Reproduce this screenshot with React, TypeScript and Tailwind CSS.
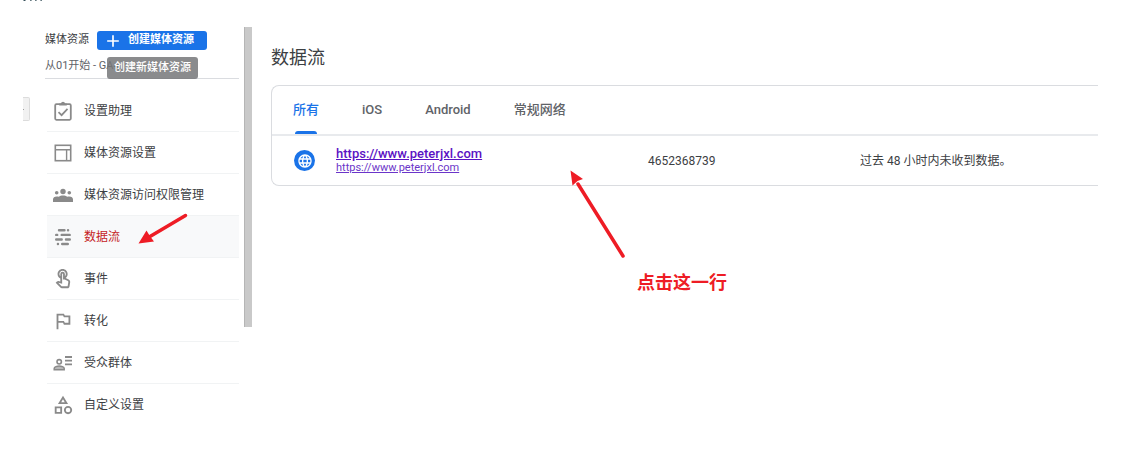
import type { ReactNode } from "react";
import clsx from "clsx";
import {
   MdAdd,
   MdLanguage,
   MdOutlineCategory,
   MdOutlinedFlag,
   MdOutlineTouchApp,
} from "react-icons/md";

type NavItem = {
   label: string;
   icon: ReactNode;
   active?: boolean;
};

type Stream = {
   name: string;
   url: string;
   id: string;
   status: string;
};

function ClipboardIcon() {
   return (
      <svg viewBox="0 0 22 22" className="h-[22px] w-[22px]" fill="none" stroke="currentColor">
         <rect x="3.200" y="4.200" width="15.600" height="15.600" rx="1.200" strokeWidth="1.800" />
         <path d="M7.200 3.400h1.600a2.300 2.300 0 0 1 4.400 0h1.600v2H7.200z" fill="currentColor" stroke="none" />
         <path d="M6.500 12.200 9.600 15.200 15.500 8.800" strokeWidth="1.700" />
      </svg>
   );
}

function LayoutIcon() {
   return (
      <svg viewBox="0 0 22 22" className="h-[22px] w-[22px]" fill="none" stroke="currentColor">
         <rect x="3.300" y="3.300" width="15.400" height="15.400" strokeWidth="1.600" />
         <path d="M4 7.700h14M14.600 8v10.500" strokeWidth="1.400" />
      </svg>
   );
}

function GroupIcon() {
   return (
      <svg viewBox="0 0 22 22" className="h-[22px] w-[22px]" fill="currentColor">
         <circle cx="11" cy="7.500" r="2.700" />
         <circle cx="4.700" cy="8.800" r="1.800" />
         <circle cx="17.300" cy="8.800" r="1.800" />
         <path d="M1 18v-2.400c0-2 1.500-3.200 3.700-3.200.8 0 1.500.1 2 .4 1.200-.9 2.600-1.300 4.300-1.300s3.100.4 4.300 1.300c.5-.3 1.200-.4 2-.4 2.200 0 3.700 1.200 3.700 3.200V18z" />
      </svg>
   );
}

function StreamIcon() {
   return (
      <svg
         viewBox="0 0 22 22"
         className="h-[22px] w-[22px]"
         stroke="currentColor"
         strokeWidth="2.400"
         strokeLinecap="round"
      >
         <path d="M7 4.300h5.500M16 4.300h.1M4.200 8.900h1M9.700 8.900h8M4.200 13.500h5.500M14 13.500h3.800M5.900 18h.1M10.200 18h5.600" />
      </svg>
   );
}

function AudienceIcon() {
   return (
      <svg viewBox="0 0 22 22" className="h-[22px] w-[22px]" fill="none" stroke="currentColor">
         <circle cx="7.200" cy="9.800" r="2.200" strokeWidth="1.600" />
         <path
            d="M2.200 17.700v-1.200c0-1.500 3-2.500 5-2.500s5 1 5 2.500v1.200z"
            fill="currentColor"
            fillOpacity=".6"
            strokeWidth="1.500"
         />
         <path d="M13 5h7M13 8.700h7M13 12.400h7" strokeWidth="1.800" />
      </svg>
   );
}

const navItems: NavItem[] = [
   { label: "设置助理", icon: <ClipboardIcon /> },
   { label: "媒体资源设置", icon: <LayoutIcon /> },
   { label: "媒体资源访问权限管理", icon: <GroupIcon /> },
   { label: "数据流", icon: <StreamIcon />, active: true },
   { label: "事件", icon: <MdOutlineTouchApp className="h-[22px] w-[22px]" /> },
   { label: "转化", icon: <MdOutlinedFlag className="h-[22px] w-[22px]" /> },
   { label: "受众群体", icon: <AudienceIcon /> },
   { label: "自定义设置", icon: <MdOutlineCategory className="h-[22px] w-[22px]" /> },
];

const tabs = ["所有", "iOS", "Android", "常规网络"];

const streams: Stream[] = [
   {
      name: "https://www.peterjxl.com",
      url: "https://www.peterjxl.com",
      id: "4652368739",
      status: "过去 48 小时内未收到数据。",
   },
];

function Sidebar() {
   return (
      <aside className="w-[194px] shrink-0">
         <div className="flex h-[27px] items-center gap-2 text-[11px] text-[#3c4043]">
            <span>媒体资源</span>
            <button
               type="button"
               className="flex h-[19px] w-[110px] items-center gap-[5px] rounded-[3px] bg-[#1a73e8] pl-[6px] font-bold text-white"
            >
               <MdAdd className="h-5 w-5" />
               <span>创建媒体资源</span>
            </button>
         </div>

         <div className="relative flex h-[25px] items-center border-b border-[#dadce0] text-[11px] text-[#5f6368]">
            <span>从01开始 - GA4</span>
            <span
               role="tooltip"
               className="absolute top-[3px] right-[41px] flex h-[22px] w-[91px] items-center justify-center rounded-[3px] bg-[#757779]/85 font-medium text-white"
            >
               创建新媒体资源
            </span>
         </div>

         <nav className="mt-[11px] ml-[2px]">
            <ul>
               {navItems.map((item) => (
                  <li
                     key={item.label}
                     className={clsx(
                        "relative border-b border-[#f1f3f4] last:border-b-0",
                        item.active && "bg-[#f8f9fa]"
                     )}
                  >
                     <a
                        href="#"
                        className={clsx(
                           "flex h-[41px] items-center gap-[10px] pl-[5px] text-xs",
                           item.active ? "text-[#c5221f]" : "text-[#3c4043]"
                        )}
                     >
                        <span className="text-[#8a8a8a]">{item.icon}</span>
                        {item.label}
                     </a>
                     {item.active && (
                        <svg viewBox="0 0 50 32" className="absolute -top-1 right-[51px] h-8 w-[50px] text-[#ee1c25]">
                           <path d="M47.500 3.500 12 24.500" stroke="currentColor" strokeWidth="3.500" strokeLinecap="round" />
                           <path d="M.5 31.500 8.500 18.500l3 5 4.500 6z" fill="currentColor" />
                        </svg>
                     )}
                  </li>
               ))}
            </ul>
         </nav>
      </aside>
   );
}

function StreamTable() {
   return (
      <table className="w-full table-fixed text-left text-[#3c4043]">
         <tbody>
            {streams.map((stream) => (
               <tr key={stream.id} className="h-[49px]">
                  <td className="w-16 pl-[22px]">
                     <span className="flex h-[21px] w-[21px] items-center justify-center rounded-full bg-[#1a73e8] text-white">
                        <MdLanguage className="h-4 w-4" />
                     </span>
                  </td>
                  <td className="w-[312px]">
                     <a href="#" className="block w-fit text-[13px] leading-[14px] font-medium text-[#5b12c4] underline">
                        {stream.name}
                     </a>
                     <a href="#" className="block w-fit text-[11px] leading-[14px] text-[#6b35c9] underline">
                        {stream.url}
                     </a>
                  </td>
                  <td className="w-[212px] text-xs">{stream.id}</td>
                  <td className="text-xs">{stream.status}</td>
               </tr>
            ))}
         </tbody>
      </table>
   );
}

export default function App() {
   return (
      <div className="relative min-h-screen overflow-hidden bg-white pt-[27px] font-[Roboto,'Noto_Sans_CJK_SC',sans-serif]">
         {/* Tail of the line above */}
         <svg viewBox="0 0 20 2" className="absolute top-0 left-[23px] h-[2px] w-5 text-[#36505a]" fill="currentColor">
            <path d="M1 0h2L2 1H0zM7 0h1.500v1H7.500zM12 0h1.500v1H12.500zM17 0h1.500L19 1H18z" />
         </svg>

         <div className="flex items-start">
            <div className="mt-[70px] ml-[23px] flex h-6 w-[7px] shrink-0 items-center rounded-r-[2px] border border-l-0 border-[#dcdcdc] bg-[#f1f1f1]">
               <span className="h-px w-px bg-[#9e9e9e]" />
            </div>

            <div className="ml-[15px] flex shrink-0 items-start gap-[5px]">
               <Sidebar />
               <div className="h-[300px] w-2 border-l border-[#b5b5b5] bg-[#c9c9c9]" />
            </div>

            <main className="mr-10 ml-[19px] min-w-0 flex-1 pt-4">
               <h1 className="text-lg leading-[30px] text-[#3c4043]">数据流</h1>

               <section className="relative mt-3 rounded-l-lg border border-r-0 border-[#dadce0]">
                  <div role="tablist" className="flex gap-[43px] border-b-2 border-[#e8eaed] pl-[21px] text-[13px] font-medium">
                     {tabs.map((tab, index) => (
                        <button
                           key={tab}
                           type="button"
                           role="tab"
                           aria-selected={index === 0}
                           className={clsx(
                              "relative flex h-12 items-center",
                              index === 0 ? "text-[#1a73e8]" : "text-[#5f6368]"
                           )}
                        >
                           {tab}
                           {index === 0 && (
                              <span className="absolute inset-x-[2px] bottom-0 h-[3px] rounded-t-[3px] bg-[#1a73e8]" />
                           )}
                        </button>
                     ))}
                  </div>
                  <StreamTable />

                  {/* Callout pointing at the row */}
                  <div className="absolute top-[84px] left-[298px] text-[#ee1c25]">
                     <svg viewBox="0 0 58 90" className="h-[90px] w-[58px]">
                        <path d="M53 86 8 14" stroke="currentColor" strokeWidth="3.500" strokeLinecap="round" />
                        <path d="M.5.500 13 9 7.500 11 2.500 15.500z" fill="currentColor" />
                     </svg>
                     <p className="pl-[67px] text-lg leading-[46px] font-bold whitespace-nowrap">点击这一行</p>
                  </div>
               </section>
            </main>
         </div>
      </div>
   );
}
